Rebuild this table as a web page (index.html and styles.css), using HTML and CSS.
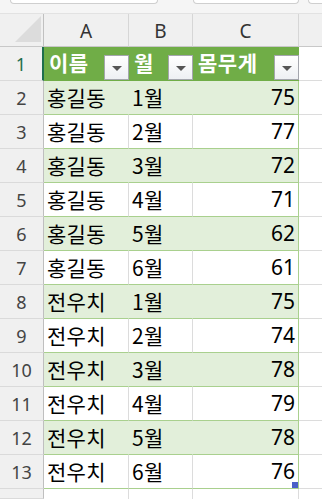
FILE: index.html
```html
<!DOCTYPE html>
<html lang="ko">
<head>
<meta charset="utf-8">
<link rel="stylesheet" href="styles.css">
</head>
<body>
<div class="app">
  <div class="topbar">
    <div class="tab tab1"></div>
    <div class="tab tab2"></div>
    <div class="tab tab3"></div>
  </div>
  <div class="sheet">
    <div class="colhdr corner"><svg width="28" height="28" viewBox="0 0 28 28"><polygon points="1,26 27,26 27,0" fill="#dcdcdc"/></svg></div>
    <div class="colhdr">A</div>
    <div class="colhdr">B</div>
    <div class="colhdr">C</div>
    <div class="colhdr last"></div>

    <div class="rowhdr active">1</div>
    <div class="th"><span>이름</span><span class="filter"><i></i></span></div>
    <div class="th"><span>월</span><span class="filter"><i></i></span></div>
    <div class="th"><span>몸무게</span><span class="filter"><i></i></span></div>
    <div class="blank"></div>

    <div class="rowhdr">2</div><div class="td band">홍길동</div><div class="td band">1월</div><div class="td band num">75</div><div class="blank"></div>
    <div class="rowhdr">3</div><div class="td">홍길동</div><div class="td">2월</div><div class="td num">77</div><div class="blank"></div>
    <div class="rowhdr">4</div><div class="td band">홍길동</div><div class="td band">3월</div><div class="td band num">72</div><div class="blank"></div>
    <div class="rowhdr">5</div><div class="td">홍길동</div><div class="td">4월</div><div class="td num">71</div><div class="blank"></div>
    <div class="rowhdr">6</div><div class="td band">홍길동</div><div class="td band">5월</div><div class="td band num">62</div><div class="blank"></div>
    <div class="rowhdr">7</div><div class="td">홍길동</div><div class="td">6월</div><div class="td num">61</div><div class="blank"></div>
    <div class="rowhdr">8</div><div class="td band">전우치</div><div class="td band">1월</div><div class="td band num">75</div><div class="blank"></div>
    <div class="rowhdr">9</div><div class="td">전우치</div><div class="td">2월</div><div class="td num">74</div><div class="blank"></div>
    <div class="rowhdr">10</div><div class="td band">전우치</div><div class="td band">3월</div><div class="td band num">78</div><div class="blank"></div>
    <div class="rowhdr">11</div><div class="td">전우치</div><div class="td">4월</div><div class="td num">79</div><div class="blank"></div>
    <div class="rowhdr">12</div><div class="td band">전우치</div><div class="td band">5월</div><div class="td band num">78</div><div class="blank"></div>
    <div class="rowhdr">13</div><div class="td">전우치</div><div class="td">6월</div><div class="td num last-cell">76<span class="handle"></span></div><div class="blank"></div>

    <div class="rowhdr"></div><div class="empty"></div><div class="empty"></div><div class="empty"></div><div class="empty noright"></div>
  </div>
</div>
</body>
</html>
```

FILE: styles.css
```css
* { box-sizing: border-box; margin: 0; padding: 0; }
html, body { width: 322px; height: 499px; overflow: hidden; background: #fff; }
body { font-family: "Noto Sans CJK KR", "Noto Sans", sans-serif; }

.app { width: 322px; height: 499px; display: flex; flex-direction: column; }

.topbar {
  height: 14px;
  background: #f5f5f5;
  border-bottom: 1px solid #e2e2e2;
  display: flex;
  align-items: flex-start;
}
.tab {
  height: 4px;
  background: #fff;
  border: 1px solid #cfcfcf;
  border-top: none;
  border-radius: 0 0 5px 5px;
}
.tab1 { margin-left: 10px; width: 148px; }
.tab2 { margin-left: 35px; width: 106px; }
.tab3 { margin-left: 9px; flex: 1; border-right: none; border-radius: 0 0 0 5px; }

.sheet {
  flex: 1;
  display: grid;
  grid-template-columns: 44px 85px 64px 106px 23px;
  grid-template-rows: 33px repeat(13, 34px) 1fr;
  position: relative;
}

.colhdr {
  background: #f0f0f0;
  border-right: 1px solid #d6d6d6;
  border-bottom: 1px solid #c8c8c8;
  display: flex;
  align-items: center;
  justify-content: center;
  font-family: "Noto Sans", "Open Sans", sans-serif;
  font-size: 19px;
  color: #333;
  padding-top: 2px;
}
.colhdr.corner { border-right: 1px solid #c0c0c0; align-items: flex-end; justify-content: flex-end; padding: 0 1px 2px 0; }
.colhdr.corner svg { display: block; }
.colhdr.last { border-right: none; }

.rowhdr {
  background: #f0f0f0;
  border-right: 1px solid #bfbfbf;
  border-bottom: 1px solid #dadada;
  display: flex;
  align-items: center;
  justify-content: center;
  font-family: "Noto Sans", "Open Sans", sans-serif;
  font-size: 18px;
  color: #444;
  padding-top: 1px;
}
.rowhdr.active { color: #1e6e4e; border-right: 2px solid #1e6e4e; }

.th {
  background: #70ad47;
  color: #fff;
  font-weight: 700;
  font-size: 21px;
  display: flex;
  align-items: center;
  justify-content: space-between;
  padding-left: 5px;
  border-bottom: 1px solid #70ad47;
}
.th span:first-child { padding-bottom: 3px; letter-spacing: 0.5px; }
.filter {
  align-self: flex-end;
  width: 25px;
  height: 25px;
  flex: none;
  border: 1px solid #a4a6ad;
  background: linear-gradient(#ffffff, #eef0f3);
  display: flex;
  align-items: center;
  justify-content: center;
}
.filter i {
  display: block;
  width: 0;
  height: 0;
  border-left: 5px solid transparent;
  border-right: 5px solid transparent;
  border-top: 5px solid #555;
  margin-top: 1px;
}

.td {
  background: #fff;
  border-bottom: 1px solid #a9d08e;
  border-right: 1px solid #dcdcdc;
  font-size: 21px;
  color: #000;
  display: flex;
  align-items: center;
  padding-left: 3px;
  padding-bottom: 2px;
  letter-spacing: 0.3px;
}
.td.band { background: #e2efda; border-right-color: #e2efda; }
.td.num {
  justify-content: flex-end;
  padding-left: 0;
  padding-right: 3px;
  font-family: "Noto Sans", "Open Sans", sans-serif;
  border-right-color: #a9d08e;
  font-size: 21px;
  letter-spacing: 0;
}
.td.last-cell { position: relative; }
.handle {
  position: absolute;
  right: 0;
  bottom: 0;
  width: 6px;
  height: 6px;
  background: #4a5fc8;
}

.blank { border-bottom: 1px solid #dcdcdc; }
.empty { border-right: 1px solid #dcdcdc; }
.empty.noright { border-right: none; }
```
